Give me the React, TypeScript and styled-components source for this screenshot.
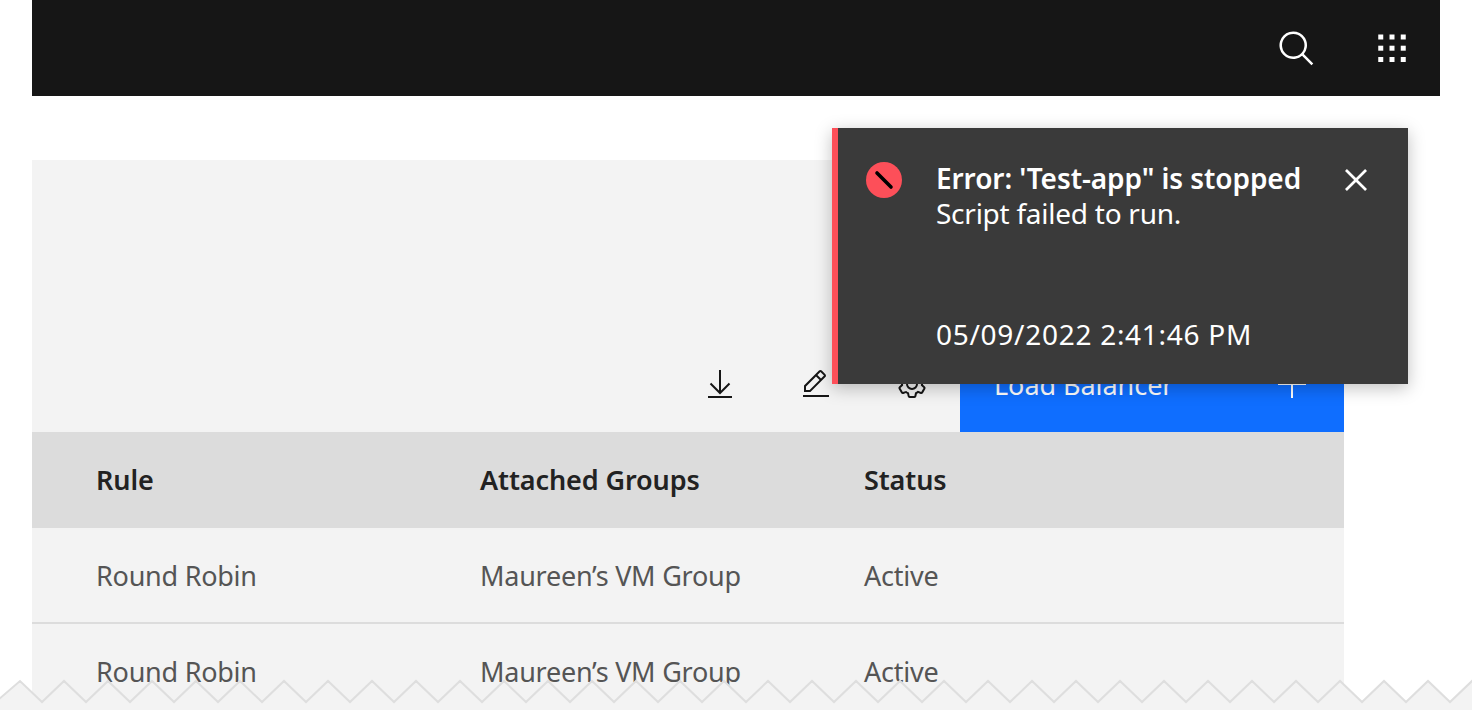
import React from "react";
import styled, { createGlobalStyle } from "styled-components";

const GlobalStyle = createGlobalStyle`
    html, body {
        margin: 0;
        padding: 0;
        background: #ffffff;
        font-family: "Noto Sans", Roboto, sans-serif;
    }
`;

const Page = styled.div`
    position: relative;
    height: 710px;
    overflow: hidden;
    padding: 0 32px;
    box-sizing: border-box;
`;

const TopBar = styled.header`
    display: flex;
    justify-content: flex-end;
    height: 96px;
    background-color: #161616;
`;

const TopBarAction = styled.div`
    display: flex;
    align-items: center;
    justify-content: center;
    width: 96px;
    height: 96px;
    color: #ffffff;
`;

const Panel = styled.main`
    width: 1312px;
    margin-top: 64px;
    background-color: #f3f3f3;
`;

const Toolbar = styled.div`
    display: flex;
    justify-content: flex-end;
    align-items: flex-end;
    height: 272px;
`;

const ToolbarIcon = styled.div`
    display: flex;
    align-items: center;
    justify-content: center;
    width: 96px;
    height: 96px;
    color: #161616;
`;

const PrimaryButton = styled.button`
    display: flex;
    justify-content: space-between;
    align-items: center;
    box-sizing: border-box;
    width: 384px;
    height: 96px;
    padding: 0 38px 0 34px;
    border: none;
    color: #ffffff;
    background-color: #0f6eff;
    font-family: inherit;
    font-size: 27px;
    letter-spacing: -0.05px;
`;

const Table = styled.div`
    display: grid;
    grid-template-columns: 384px 384px 1fr;
`;

const Cell = styled.div<{ $head?: boolean }>`
    display: flex;
    align-items: center;
    height: 96px;
    box-sizing: border-box;
    padding-left: 64px;
    padding-bottom: ${({ $head }) => ($head ? "2px" : "0")};
    font-size: 27px;
    letter-spacing: ${({ $head }) => ($head ? "-0.1px" : "-0.25px")};
    font-weight: ${({ $head }) => ($head ? 600 : 400)};
    color: ${({ $head }) => ($head ? "#222222" : "#555555")};
    background-color: ${({ $head }) => ($head ? "#dcdcdc" : "#f3f3f3")};
    border-bottom: ${({ $head }) => ($head ? "none" : "2px solid #dcdcdc")};
`;

const Toast = styled.aside`
    position: absolute;
    top: 128px;
    left: 832px;
    display: grid;
    grid-template-columns: 98px 1fr 74px;
    box-sizing: border-box;
    width: 576px;
    height: 256px;
    padding-top: 32px;
    color: #ffffff;
    background-color: #3a3a3a;
    border-left: 6px solid #fd4f59;
    box-shadow: 0 4px 16px rgba(0, 0, 0, 0.25);
`;

const ToastIcon = styled.div`
    padding: 2px 0 0 28px;
`;

const ToastBody = styled.div`
    font-size: 28px;
    line-height: 36px;
    white-space: nowrap;
`;

const ToastTitle = styled.div`
    font-weight: 600;
    letter-spacing: -0.08px;
`;

const ToastText = styled.div`
    margin-top: -1px;
    letter-spacing: -0.25px;
`;

const ToastTime = styled.div`
    margin-top: 85px;
    letter-spacing: 0.72px;
`;

const ToastClose = styled.div`
    margin-top: -2px;
`;

const Torn = styled.svg`
    position: absolute;
    left: 0;
    bottom: 0;
`;

function tornPath() {
    let d = "M-2 700";
    for (let x = 20; x < 1520; x += 44) {
        d += ` L${x} 681 L${x + 22} 702`;
    }
    return d;
}

const SearchIcon = () => (
    <svg width="40" height="40" viewBox="0 0 32 32" fill="currentColor" style={{ transform: "translate(1px, 1px)" }}>
        <path d="M29 27.5859l-7.5521-7.5521a11.0177 11.0177 0 1 0-1.4141 1.4141L27.5859 29ZM4 13a9 9 0 1 1 9 9A9.01 9.01 0 0 1 4 13Z" />
    </svg>
);

const SwitcherIcon = () => (
    <svg width="40" height="40" viewBox="0 0 40 40" fill="currentColor">
        {[6.5, 17.7, 29].map((y) =>
            [6.25, 17.5, 28.75].map((x) => <rect key={`${x}-${y}`} x={x} y={y} width="5" height="5" />)
        )}
    </svg>
);

const DownloadIcon = () => (
    <svg width="32" height="32" viewBox="0 0 32 32" fill="none" stroke="currentColor" strokeWidth="2">
        <path d="M4 29H28M16 2V25M6.5 15.5L16 25L25.5 15.5" />
    </svg>
);

const EditIcon = () => (
    <svg width="32" height="32" viewBox="0 0 32 32" fill="currentColor">
        <path d="M3 27H29V29H3zM25.4 9c.8-.8.8-2 0-2.8l-3.6-3.6c-.8-.8-2-.8-2.8 0l-15 15V24h6.4L25.4 9zM20.4 4L24 7.6l-3 3L17.4 7 20.4 4zM6 22v-3.6l10-10 3.6 3.6-10 10H6z" />
    </svg>
);

const SettingsIcon = () => (
    <svg width="32" height="32" viewBox="0 0 32 32" fill="currentColor">
        <path d="M27,16.76c0-.25,0-.5,0-.76s0-.51,0-.77l1.92-1.68A2,2,0,0,0,29.3,11L26.94,7a2,2,0,0,0-1.73-1,2,2,0,0,0-.64.1l-2.43.82a11.35,11.35,0,0,0-1.31-.75l-.51-2.52a2,2,0,0,0-2-1.61H13.64a2,2,0,0,0-2,1.61l-.51,2.52a11.48,11.48,0,0,0-1.32.75L7.43,6.06A2,2,0,0,0,6.79,6,2,2,0,0,0,5.06,7L2.7,11a2,2,0,0,0,.41,2.51L5,15.24c0,.25,0,.5,0,.76s0,.51,0,.77L3.11,18.45A2,2,0,0,0,2.7,21L5.06,25a2,2,0,0,0,1.73,1,2,2,0,0,0,.64-.1l2.43-.82a11.35,11.35,0,0,0,1.31.75l.51,2.52a2,2,0,0,0,2,1.61h4.72a2,2,0,0,0,2-1.61l.51-2.52a11.48,11.48,0,0,0,1.32-.75l2.42.82a2,2,0,0,0,.64.1,2,2,0,0,0,1.73-1L29.3,21a2,2,0,0,0-.41-2.51ZM25.21,24l-3.43-1.16a8.86,8.86,0,0,1-2.71,1.57L18.36,28H13.64l-.71-3.55a9.36,9.36,0,0,1-2.7-1.57L6.79,24,4.43,20l2.72-2.4a8.9,8.9,0,0,1,0-3.13L4.43,12,6.79,8l3.43,1.16a8.86,8.86,0,0,1,2.71-1.57L13.64,4h4.72l.71,3.55a9.36,9.36,0,0,1,2.7,1.57L25.21,8,27.57,12l-2.72,2.4a8.9,8.9,0,0,1,0,3.13L27.57,20Z" />
        <path d="M16,22a6,6,0,1,1,6-6A5.94,5.94,0,0,1,16,22Zm0-10a3.91,3.91,0,0,0-4,4,3.91,3.91,0,0,0,4,4,3.91,3.91,0,0,0,4-4A3.91,3.91,0,0,0,16,12Z" />
    </svg>
);

const AddIcon = () => (
    <svg width="28" height="28" viewBox="0 0 28 28" fill="none" stroke="currentColor" strokeWidth="2">
        <path d="M14 0V28M0 14H28" />
    </svg>
);

const CloseIcon = () => (
    <svg width="44" height="44" viewBox="0 0 32 32" fill="currentColor">
        <path d="M24 9.4L22.6 8 16 14.6 9.4 8 8 9.4 14.6 16 8 22.6 9.4 24 16 17.4 22.6 24 24 22.6 17.4 16 24 9.4z" />
    </svg>
);

const ErrorIcon = () => (
    <svg width="36" height="36" viewBox="0 0 36 36">
        <circle cx="18" cy="18" r="18" fill="#fd4f59" />
        <path d="M11 11L25 25" stroke="#000000" strokeWidth="3.6" strokeLinecap="round" />
    </svg>
);

const rows = [
    ["Round Robin", "Maureen’s VM Group", "Active"],
    ["Round Robin", "Maureen’s VM Group", "Active"],
];

export default function App() {
    return (
        <Page>
            <GlobalStyle />
            <TopBar>
                <TopBarAction><SearchIcon /></TopBarAction>
                <TopBarAction><SwitcherIcon /></TopBarAction>
            </TopBar>
            <Panel>
                <Toolbar>
                    <ToolbarIcon><DownloadIcon /></ToolbarIcon>
                    <ToolbarIcon><EditIcon /></ToolbarIcon>
                    <ToolbarIcon><SettingsIcon /></ToolbarIcon>
                    <PrimaryButton>
                        Load Balancer
                        <AddIcon />
                    </PrimaryButton>
                </Toolbar>
                <Table>
                    <Cell $head>Rule</Cell>
                    <Cell $head>Attached Groups</Cell>
                    <Cell $head>Status</Cell>
                    {rows.map((row, i) =>
                        row.map((text, j) => <Cell key={`${i}-${j}`}>{text}</Cell>)
                    )}
                </Table>
            </Panel>
            <Toast>
                <ToastIcon><ErrorIcon /></ToastIcon>
                <ToastBody>
                    <ToastTitle>Error: 'Test-app" is stopped</ToastTitle>
                    <ToastText>Script failed to run.</ToastText>
                    <ToastTime>05/09/2022 2:41:46 PM</ToastTime>
                </ToastBody>
                <ToastClose><CloseIcon /></ToastClose>
            </Toast>
            <Torn width="1472" height="710" viewBox="0 0 1472 710">
                <path d={`${tornPath()} L1520 712 L-2 712 Z`} fill="#f3f3f3" stroke="#dedede" strokeWidth="2" />
            </Torn>
        </Page>
    );
}
